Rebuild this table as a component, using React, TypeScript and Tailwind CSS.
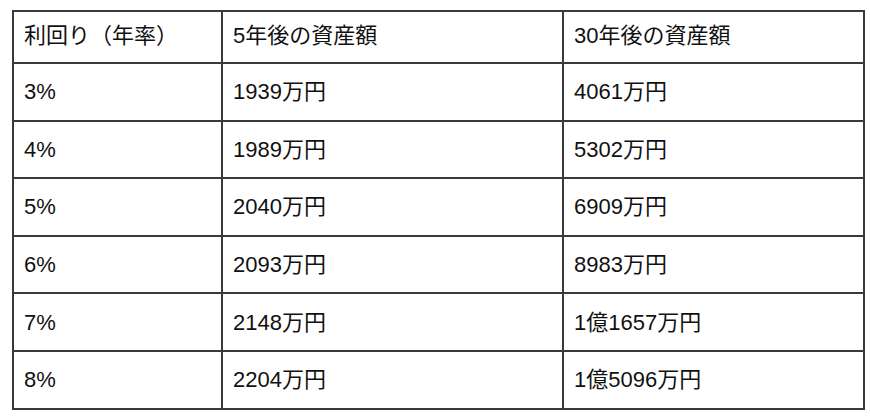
const rows = [
  ["3%", "1939万円", "4061万円"],
  ["4%", "1989万円", "5302万円"],
  ["5%", "2040万円", "6909万円"],
  ["6%", "2093万円", "8983万円"],
  ["7%", "2148万円", "1億1657万円"],
  ["8%", "2204万円", "1億5096万円"],
]

export default function App() {
  return (
    <div
      className="min-h-screen bg-white pl-[12px] pt-[10px] text-[22px] text-[#111]"
      style={{ fontFamily: '"Liberation Sans", Arial, "Noto Sans CJK JP", sans-serif' }}
    >
      <table className="table-fixed border-collapse w-[851px]">
        <colgroup>
          <col className="w-[209px]" />
          <col className="w-[341px]" />
          <col className="w-[301px]" />
        </colgroup>
        <thead>
          <tr className="h-[52px]">
            <th className="border-2 border-[#3a3a3a] px-[10px] text-left font-normal align-middle pb-[4px]">利回り（年率）</th>
            <th className="border-2 border-[#3a3a3a] px-[10px] text-left font-normal align-middle pb-[4px]">5年後の資産額</th>
            <th className="border-2 border-[#3a3a3a] px-[10px] text-left font-normal align-middle pb-[4px]">30年後の資産額</th>
          </tr>
        </thead>
        <tbody>
          {rows.map((r, i) => (
            <tr key={i} className={i === 4 ? "h-[58px]" : "h-[57.5px]"}>
              {r.map((c, j) => (
                <td key={j} className="border-2 border-[#3a3a3a] px-[10px] align-middle">
                  {c}
                </td>
              ))}
            </tr>
          ))}
        </tbody>
      </table>
    </div>
  )
}
